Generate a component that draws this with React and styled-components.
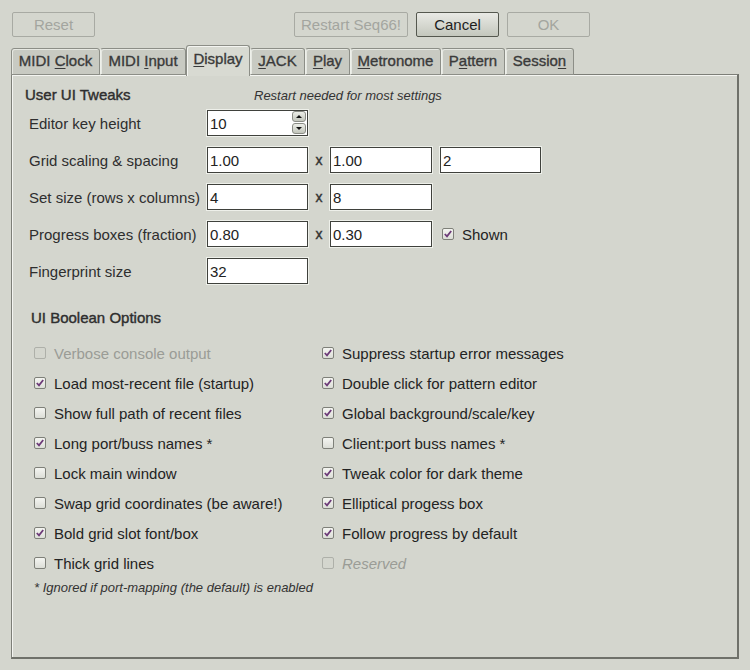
import styled, { createGlobalStyle, css } from "styled-components";

const Global = createGlobalStyle`
  body {
    margin: 0;
    background: #d4d6ce;
    font-family: "Liberation Sans", Arial, sans-serif;
    font-size: 15px;
    color: #2e2e2e;
  }
`;

const Window = styled.div`
  width: 750px;
  height: 670px;
  box-sizing: border-box;
  padding: 12px 11px 0 11px;
  background: #d4d6ce;
`;

const TopBar = styled.div`
  display: flex;
  align-items: center;
  height: 25px;
  padding-left: 1px;
`;

const Button = styled.button`
  height: 25px;
  width: ${(p) => p.w}px;
  margin-left: ${(p) => p.ml || 0}px;
  box-sizing: border-box;
  font-family: inherit;
  font-size: 15px;
  padding: 0;
  border-radius: 2px;
  ${(p) =>
    p.disabled
      ? css`
          background: #d4d6ce;
          border: 1px solid #a8aaa3;
          color: #a3a59f;
        `
      : css`
          background: linear-gradient(#e9eae5, #c4c7bd);
          border: 1px solid #55584f;
          color: #1e1e1e;
        `}
`;

const Tabs = styled.div`
  display: flex;
  align-items: flex-end;
  margin-top: 7px;
  height: 31px;
  position: relative;
  z-index: 1;
`;

const Tab = styled.div`
  box-sizing: border-box;
  width: ${(p) => p.w}px;
  height: ${(p) => (p.active ? 31 : 27)}px;
  margin-bottom: ${(p) => (p.active ? -1 : 0)}px;
  display: flex;
  align-items: center;
  justify-content: center;
  padding-bottom: ${(p) => (p.active ? 5 : 2)}px;
  border: 1px solid #8c8e87;
  border-bottom: ${(p) => (p.active ? "none" : "1px solid #8c8e87")};
  border-left-color: ${(p) => (p.first || p.active ? "#8c8e87" : "#eef0ea")};
  border-radius: 3px 3px 0 0;
  background: ${(p) => (p.active ? "#d8dad2" : "#c8cac2")};
  box-shadow: ${(p) => (p.active ? "inset 1px 1px 0 #f4f5f1" : "inset 1px 1px 0 #e6e8e2")};
  color: #3a3a3a;
  -webkit-text-stroke: 0.35px #3a3a3a;
  white-space: pre;
  u {
    text-underline-offset: 2px;
  }
`;

const Panel = styled.div`
  box-sizing: border-box;
  width: 728px;
  height: 585px;
  margin-top: -1px;
  border: 1px solid #7d7f78;
  border-bottom-width: 2px;
  border-right-width: 2px;
  border-bottom-color: #6f716a;
  border-right-color: #6f716a;
  box-shadow: inset 1px 1px 0 #f4f5f1;
  padding: 11px 0 0 13px;
`;

const SectionHead = styled.div`
  display: flex;
  align-items: baseline;
  height: 20px;
`;

const SectionTitle = styled.div`
  -webkit-text-stroke: 0.4px #2e2e2e;
  width: ${(p) => p.w || "auto"};
`;

const Note = styled.div`
  font-style: italic;
  font-size: 13px;
  color: #333;
`;

const Form = styled.div`
  display: flex;
  flex-direction: column;
  gap: 11px;
  margin-top: 4px;
  padding-left: 4px;
`;

const Row = styled.div`
  display: flex;
  align-items: center;
  height: 26px;
`;

const Label = styled.div`
  width: 178px;
`;

const Field = styled.div`
  position: relative;
  box-sizing: border-box;
  width: ${(p) => p.w}px;
  height: 26px;
  margin-left: ${(p) => p.ml || 0}px;
  background: #fff;
  border: 1px solid #3f413c;
  box-shadow: 0 0 0 1px #eef0ea;
  display: flex;
  align-items: center;
  padding-left: 2px;
  color: #222;
`;

const Times = styled.div`
  width: 22px;
  text-align: center;
  font-size: 14px;
  -webkit-text-stroke: 0.4px #333;
  color: #333;
`;

const Spin = styled.div`
  position: absolute;
  right: 1px;
  top: 0;
  display: flex;
  flex-direction: column;
  gap: 1px;
`;

const SpinBtn = styled.div`
  width: 14px;
  height: 11px;
  box-sizing: border-box;
  border: 1px solid #8a8c85;
  border-radius: 3px;
  background: linear-gradient(#eceee8, #c2c5bb);
  display: flex;
  align-items: center;
  justify-content: center;
  &::after {
    content: "";
    border-left: 3px solid transparent;
    border-right: 3px solid transparent;
    ${(p) =>
      p.up
        ? "border-bottom: 3px solid #111;"
        : "border-top: 3px solid #111;"}
  }
`;

const BoolTitle = styled(SectionTitle)`
  margin-top: 25px;
  margin-left: 6px;
`;

const Grid = styled.div`
  display: grid;
  grid-template-columns: 288px 288px;
  grid-auto-rows: 30px;
  margin-top: 12px;
  padding-left: 9px;
`;

const CheckItem = styled.div`
  display: flex;
  align-items: center;
  gap: 8px;
  margin-left: ${(p) => p.ml || 0}px;
  color: ${(p) => (p.disabled ? "#9a9c96" : "#232323")};
  font-style: ${(p) => (p.italic ? "italic" : "normal")};
`;

const Box = styled.span`
  box-sizing: border-box;
  width: 12px;
  height: 12px;
  flex: none;
  border: 1px solid ${(p) => (p.disabled ? "#aeb0a9" : "#7e8079")};
  border-radius: 2px;
  background: ${(p) => (p.disabled ? "#d4d6ce" : "linear-gradient(#f4f5f1, #dcded7)")};
  display: flex;
  align-items: center;
  justify-content: center;
`;

const Footnote = styled(Note)`
  margin-top: 2px;
  padding-left: 9px;
`;

const Check = ({ on, disabled }) => (
  <Box disabled={disabled}>
    {on && (
      <svg width="8" height="8" viewBox="0 0 8 8">
        <path d="M0.8 4 L3 6.3 L7.2 1" stroke="#6c3a78" strokeWidth="1.8" fill="none" />
      </svg>
    )}
  </Box>
);

const Item = ({ on, disabled, italic, ml, children }) => (
  <CheckItem disabled={disabled} italic={italic} ml={ml}>
    <Check on={on} disabled={disabled} />
    <span>{children}</span>
  </CheckItem>
);

const tabs = [
  { w: 89, pre: "MIDI ", u: "C", post: "lock" },
  { w: 86, pre: "MIDI ", u: "I", post: "nput" },
  { w: 64, pre: "", u: "D", post: "isplay", active: true },
  { w: 55, pre: "", u: "J", post: "ACK" },
  { w: 45, pre: "", u: "P", post: "lay" },
  { w: 91, pre: "", u: "M", post: "etronome" },
  { w: 64, pre: "P", u: "a", post: "ttern" },
  { w: 69, pre: "Sessio", u: "n", post: "" },
];

const options = [
  ["Verbose console output", false, true],
  ["Suppress startup error messages", true],
  ["Load most-recent file (startup)", true],
  ["Double click for pattern editor", true],
  ["Show full path of recent files", false],
  ["Global background/scale/key", true],
  ["Long port/buss names *", true],
  ["Client:port buss names *", false],
  ["Lock main window", false],
  ["Tweak color for dark theme", true],
  ["Swap grid coordinates (be aware!)", false],
  ["Elliptical progess box", true],
  ["Bold grid slot font/box", true],
  ["Follow progress by default", true],
  ["Thick grid lines", false],
  ["Reserved", false, true, true],
];

export default function App() {
  return (
    <Window>
      <Global />
      <TopBar>
        <Button w={83} disabled>Reset</Button>
        <Button w={114} ml={199} disabled>Restart Seq66!</Button>
        <Button w={83} ml={8}>Cancel</Button>
        <Button w={83} ml={8} disabled>OK</Button>
      </TopBar>
      <Tabs>
        {tabs.map((t, i) => (
          <Tab key={i} w={t.w} active={t.active} first={i === 0}>
            <span>
              {t.pre}
              <u>{t.u}</u>
              {t.post}
            </span>
          </Tab>
        ))}
      </Tabs>
      <Panel>
        <SectionHead>
          <SectionTitle w="229px">User UI Tweaks</SectionTitle>
          <Note>Restart needed for most settings</Note>
        </SectionHead>
        <Form>
          <Row>
            <Label>Editor key height</Label>
            <Field w={101}>
              10
              <Spin>
                <SpinBtn up />
                <SpinBtn />
              </Spin>
            </Field>
          </Row>
          <Row>
            <Label>Grid scaling &amp; spacing</Label>
            <Field w={101}>1.00</Field>
            <Times>x</Times>
            <Field w={102}>1.00</Field>
            <Field w={101} ml={8}>2</Field>
          </Row>
          <Row>
            <Label>Set size (rows x columns)</Label>
            <Field w={101}>4</Field>
            <Times>x</Times>
            <Field w={102}>8</Field>
          </Row>
          <Row>
            <Label>Progress boxes (fraction)</Label>
            <Field w={101}>0.80</Field>
            <Times>x</Times>
            <Field w={102}>0.30</Field>
            <Item on ml={10}>Shown</Item>
          </Row>
          <Row>
            <Label>Fingerprint size</Label>
            <Field w={101}>32</Field>
          </Row>
        </Form>
        <BoolTitle>UI Boolean Options</BoolTitle>
        <Grid>
          {options.map(([text, on, disabled, italic], i) => (
            <Item key={i} on={on} disabled={disabled} italic={italic}>
              {text}
            </Item>
          ))}
        </Grid>
        <Footnote>* Ignored if port-mapping (the default) is enabled</Footnote>
      </Panel>
    </Window>
  );
}
